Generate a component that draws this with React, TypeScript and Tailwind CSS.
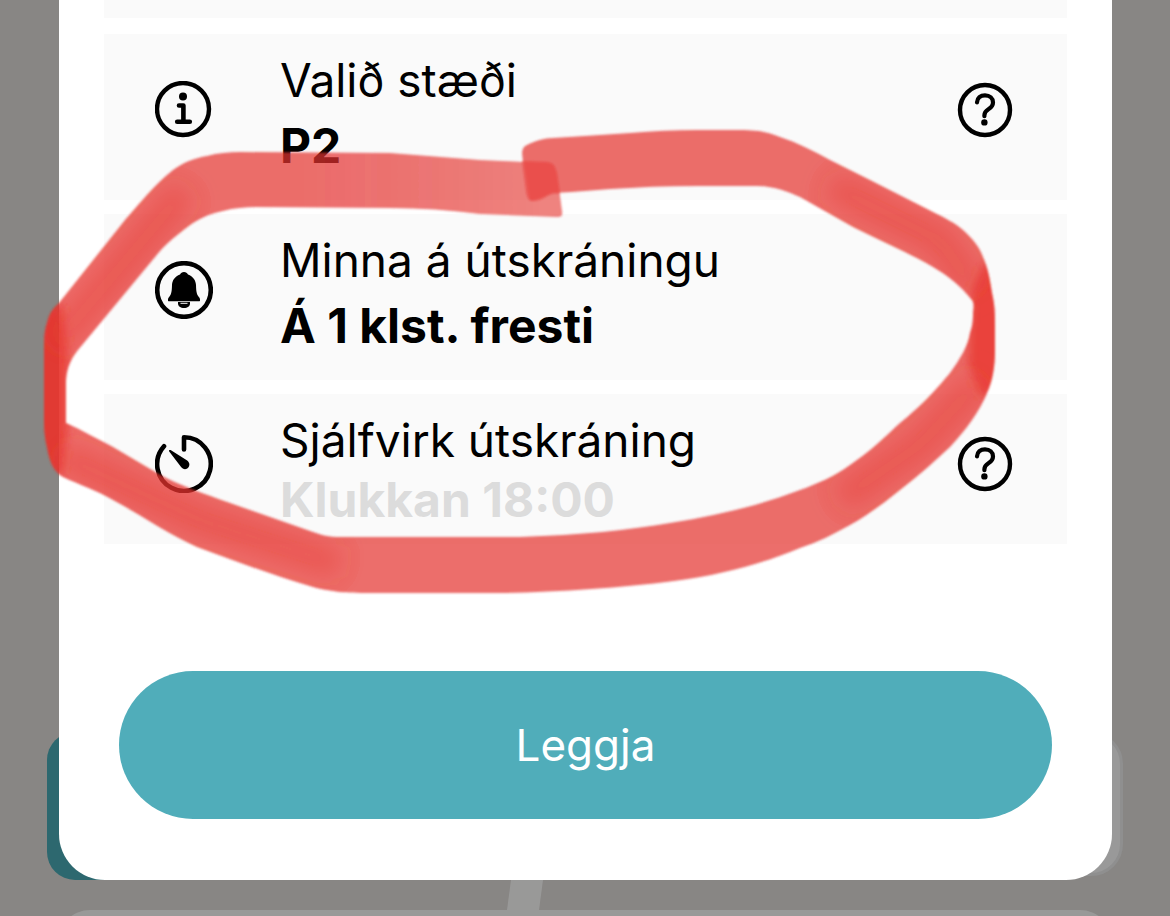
import { ReactNode } from 'react';

const InfoIcon = () => (
  <svg viewBox="0 0 58 58" className="w-[58px] h-[58px]" fill="none" stroke="currentColor" aria-hidden="true">
    <circle cx="28" cy="28" r="26" strokeWidth="4.4" />
    <circle cx="28" cy="15.5" r="4" fill="currentColor" stroke="none" />
    <path d="M24 24.5h4.4v16M22.2 40.8h12.600" strokeWidth="4.6" strokeLinecap="round" strokeLinejoin="round" />
  </svg>
);

const BellIcon = () => (
  <svg viewBox="0 0 58 58" className="w-[58px] h-[58px]" fill="none" stroke="currentColor" aria-hidden="true">
    <circle cx="29" cy="29" r="26.8" strokeWidth="4.6" />
    <path
      d="M29 11c-2 0-3.2 1-4 2.4-5 1.8-7.8 5.8-8 10.6-.2 6.4-.5 9.2-3 12.2-.8.9-1 1.4-1 2.3v1.2c0 .3.2.5.5.5h31c.3 0 .5-.2.5-.5v-1.2c0-.9-.2-1.4-1-2.3-2.5-3-2.8-5.8-3-12.2-.2-4.8-3-8.8-8-10.6-.8-1.4-2-2.4-4-2.4z"
      fill="currentColor"
      stroke="none"
    />
    <path d="M23 41h12v1.5c0 2.7-2.5 4.6-6 4.6s-6-1.9-6-4.6z" fill="currentColor" stroke="none" />
    <path d="M25.5 42.3h7" stroke="#fafafa" strokeWidth="1" />
  </svg>
);

const TimerIcon = () => (
  <svg viewBox="0 0 58 58" className="w-[58px] h-[58px]" fill="none" stroke="currentColor" aria-hidden="true">
    <path d="M29 14.5V2.3A26.8 26.8 0 1 1 9 11.2" strokeWidth="4.6" strokeLinecap="round" strokeLinejoin="round" />
    <path
      d="M14.2 15.2c.3-.4.9-.4 1.4-.1l16.2 10.2c3 2 3.3 5.2 1.5 7.3-2 2.3-5.4 2-7.4-.8L14.2 16.5c-.3-.5-.3-.9 0-1.3z"
      fill="currentColor"
      stroke="none"
    />
  </svg>
);

const HelpIcon = () => (
  <svg viewBox="0 0 58 58" className="w-[58px] h-[58px]" fill="none" stroke="currentColor" aria-hidden="true">
    <circle cx="29" cy="29" r="25" strokeWidth="4.4" />
    <path
      d="M21 21.3c.3-4.3 3.500-7 8-7 4.7 0 8 2.9 8 7.1 0 3.3-1.7 5-4.6 6.8-3 1.9-4 3.3-4 6v1"
      strokeWidth="4.2"
      strokeLinecap="round"
      strokeLinejoin="round"
    />
    <circle cx="28.4" cy="41.4" r="3.2" fill="currentColor" stroke="none" />
  </svg>
);

interface SettingRowProps {
  icon: ReactNode;
  title: string;
  value: string;
  help?: boolean;
  compact?: boolean;
}

const SettingRow = ({ icon, title, value, help, compact }: SettingRowProps) => (
  <li className={`flex items-start bg-[#fafafa] pl-[51px] pr-[53px] ${compact ? 'h-[150px]' : 'h-[166px]'}`}>
    <span className={compact ? 'pt-[41px]' : 'pt-[47px]'}>{icon}</span>
    <div className={`flex-1 ml-[67px] ${compact ? 'pt-4 leading-[60px]' : 'pt-[13px] leading-[66px]'}`}>
      <p className="text-[46px]">{title}</p>
      <p className={`text-[48px] font-bold ${compact ? 'text-[#dcdcdc]' : ''}`}>{value}</p>
    </div>
    {help && (
      <button type="button" className={compact ? 'mt-[41px]' : 'mt-[47px]'} aria-label={`Hjálp: ${title}`}>
        <HelpIcon />
      </button>
    )}
  </li>
);

// Dimmed page that shows around the dialog
const Backdrop = () => (
  <div className="absolute inset-0 flex flex-col justify-end" aria-hidden="true">
    <div className="flex items-end justify-between px-[47px]">
      <div className="w-1/3 h-[148px] rounded-[28px] bg-[#2d686f]" />
      <div className="w-1/3 h-[144px] mb-1 rounded-[32px] border-[3px] border-[#8f8f8f] bg-[#999]" />
    </div>
    <svg viewBox="0 0 1170 30" className="w-full h-[30px] shrink-0">
      <path d="M511 0h32l-4 30h-32z" fill="#999998" />
    </svg>
    <div className="h-16 -mb-[58px] mx-[58px] shrink-0 rounded-[32px] bg-[#999998]" />
  </div>
);

const LOOP_PATH =
  'M522 154C522 149 524 146 527 145C535 141 544 138 553 138C580 136 605 135 630 133C653 131 675 130 697 130L740 130C757 130 768 132 780 137C798 143 814 151 830 160L870 180L933 212C945 218 955 223 963 230C974 240 980 248 983 257C988 268 990 280 992 293C995 306 995 315 995 327L995 350C995 365 993 380 987 393C980 411 965 431 950 447C934 462 918 476 900 490C884 503 868 515 850 525C834 534 818 542 800 548C770 561 722 575 674 581C620 588 560 592 500 593L370 593C345 593 332 592 313 587C275 576 235 561 197 547C168 534 141 515 113 500C96 490 80 485 63 477C52 471 49 458 47 447C44 435 44 424 44 413L44 347C44 335 45 329 47 323C49 314 53 308 59 303L125 220C141 202 155 184 173 170C184 162 195 158 207 156C218 153 229 152 240 152L390 153L480 160L545 163C554 163 555 166 557 173L562 211C563 216 561 217 557 217L480 214C450 210 420 208 390 208L257 207C245 207 234 208 223 211C212 213 202 217 193 223C182 231 169 241 160 251L78 350C69 361 66 372 66 383L66 423C82 430 97 439 113 447L157 473C180 486 205 494 230 503L313 532C321 535 329 537 340 537L520 537C580 535 630 530 670 523C715 516 758 506 800 490C817 484 835 476 850 465C868 453 884 438 900 423C920 407 936 390 950 373C960 359 968 346 970 333C973 325 973 319 973 313C974 306 974 303 972 300C961 286 947 275 933 267C909 253 881 241 853 227L800 197C789 192 774 186 757 186L720 186C690 186 660 186 630 188C604 189 578 192 553 193C546 195 543 201 533 201C529 201 527 198 526 192Z';

const MarkerLoop = () => (
  <svg viewBox="0 0 1170 916" className="absolute top-0 left-0 w-full pointer-events-none" aria-hidden="true">
    <defs>
      <filter id="soft" filterUnits="userSpaceOnUse" x="0" y="80" width="1100" height="560">
        <feGaussianBlur stdDeviation="1.3" />
      </filter>
      <filter id="shade" filterUnits="userSpaceOnUse" x="0" y="80" width="1100" height="560">
        <feGaussianBlur stdDeviation="12" />
      </filter>
      <filter id="dense" filterUnits="userSpaceOnUse" x="0" y="80" width="1100" height="560">
        <feGaussianBlur stdDeviation="5" />
      </filter>
      <linearGradient id="fade" gradientUnits="userSpaceOnUse" x1="300" y1="0" x2="540" y2="0">
        <stop offset="0" stopColor="#000" stopOpacity="0" />
        <stop offset="1" stopColor="#000" stopOpacity="0.14" />
      </linearGradient>
      <mask id="tail" maskUnits="userSpaceOnUse" x="0" y="0" width="1170" height="916">
        <rect width="1170" height="916" fill="#fff" />
        <path d="M300 140H521L530 201L553 194H575V228H300Z" fill="url(#fade)" />
      </mask>
      <clipPath id="loop">
        <path d={LOOP_PATH} />
      </clipPath>
    </defs>
    <g filter="url(#soft)">
      <path mask="url(#tail)" fill="#e4322d" fillOpacity="0.71" d={LOOP_PATH} />
      <path
        d="M522 161L547 162C554 163 555 166 557 173L560 193L553 193C546 195 543 201 533 201C529 201 527 198 526 192Z"
        fill="#ea342e"
        fillOpacity="0.5"
      />
      <g clipPath="url(#loop)">
        {/* ink builds up where the stroke turns */}
        <g filter="url(#dense)" fill="#e8352f" fillOpacity="0.75">
          <path d="M30 300L62 306L68 355L68 425L62 474L30 480Z" />
          <path d="M1010 262L985 262L972 290L969 330L968 362L980 395L1010 395Z" />
        </g>
        <g filter="url(#shade)" fill="none" stroke="#e8352f" strokeOpacity="0.35" strokeWidth="32">
          <path d="M55 345L185 190" />
          <path d="M60 455L200 520L340 565" />
          <path d="M830 185L940 240L975 290" />
          <path d="M980 380L920 445L840 500" />
        </g>
      </g>
    </g>
  </svg>
);

const App = () => {
  return (
    <div className="relative min-h-screen overflow-hidden bg-[#888684] text-black font-['Inter',sans-serif]">
      <Backdrop />
      <main className="relative ml-[59px] mr-[58px] px-[45px] pb-[61px] bg-white rounded-b-[46px]">
        <div className="h-[18px] bg-[#fafafa]" />
        <ul className="flex flex-col gap-[14px] pt-4">
          <SettingRow icon={<InfoIcon />} title="Valið stæði" value="P2" help />
          <SettingRow icon={<BellIcon />} title="Minna á útskráningu" value="Á 1 klst. fresti" />
          <SettingRow icon={<TimerIcon />} title="Sjálfvirk útskráning" value="Klukkan 18:00" help compact />
        </ul>
        <div className="px-[15px] pt-[127px]">
          <button type="button" className="w-full h-[148px] rounded-full bg-[#50adba] text-white text-[44px]">
            Leggja
          </button>
        </div>
      </main>
      <MarkerLoop />
    </div>
  );
};

export default App;
